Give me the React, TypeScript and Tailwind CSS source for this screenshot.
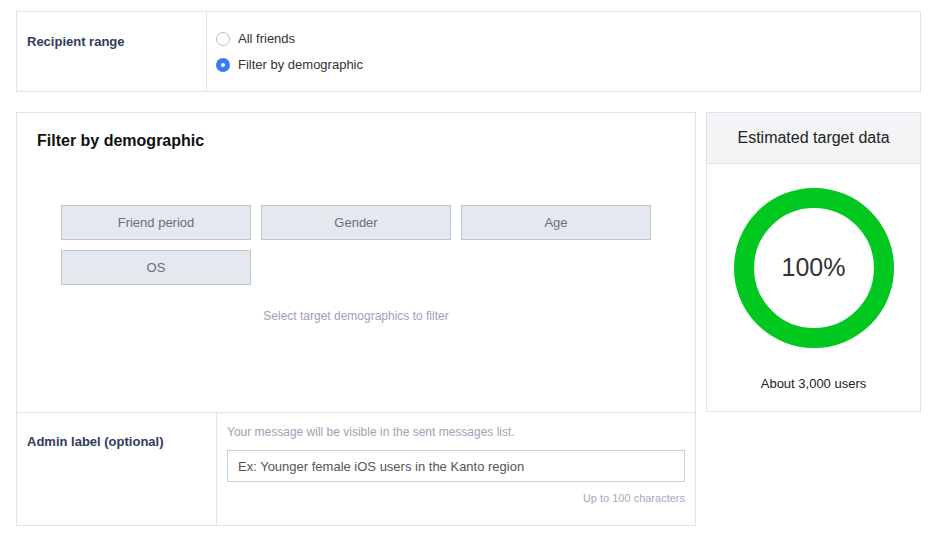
import { useState } from "react";

const FILTERS = ["Friend period", "Gender", "Age", "OS"];

function Radio({ checked, label, onClick }: { checked: boolean; label: string; onClick: () => void }) {
  return (
    <button className="flex items-center gap-2 h-[18px] text-[13px] text-[#333]" onClick={onClick}>
      {checked ? (
        <span className="w-[14px] h-[14px] rounded-full bg-[#3a7bf2] flex items-center justify-center">
          <span className="w-[4px] h-[4px] rounded-full bg-white" />
        </span>
      ) : (
        <span className="w-[14px] h-[14px] rounded-full border border-[#b9bcc2] bg-white" />
      )}
      <span>{label}</span>
    </button>
  );
}

function Donut({ percent }: { percent: number }) {
  const r = 70;
  const c = 2 * Math.PI * r;
  return (
    <div className="relative w-[160px] h-[160px]">
      <svg width="160" height="160" viewBox="0 0 160 160">
        <circle cx="80" cy="80" r={r} fill="none" stroke="#e5e7eb" strokeWidth="20" />
        <circle
          cx="80"
          cy="80"
          r={r}
          fill="none"
          stroke="#00c81f"
          strokeWidth="20"
          strokeDasharray={`${(c * percent) / 100} ${c}`}
          transform="rotate(-90 80 80)"
        />
      </svg>
      <div className="absolute inset-0 flex items-center justify-center text-[25px] text-[#333]">{percent}%</div>
    </div>
  );
}

export default function App() {
  const [range, setRange] = useState<"all" | "filter">("filter");

  return (
    <div className="w-[947px] min-h-[537px] bg-white pl-4 pt-[11px] font-['Liberation_Sans',Arial,sans-serif]">
      {/* recipient range */}
      <div className="w-[905px] h-[81px] border border-[#dfe2ea] flex">
        <div className="w-[190px] border-r border-[#dfe2ea] pl-[10px] pt-[17px]">
          <span className="text-[13px] leading-[18px] font-bold text-[#2f3b5c]">Recipient range</span>
        </div>
        <div className="pl-[9px] pt-[18px] flex flex-col gap-[8px] items-start">
          <Radio checked={range === "all"} label="All friends" onClick={() => setRange("all")} />
          <Radio checked={range === "filter"} label="Filter by demographic" onClick={() => setRange("filter")} />
        </div>
      </div>

      <div className="mt-[20px] flex gap-[10px] items-start">
        {/* demographic filter */}
        <div className="w-[680px] h-[414px] border border-[#dfe2ea] flex flex-col">
          <div className="flex-1 px-5 pt-[19px]">
            <h2 className="text-[16px] leading-[18px] font-bold text-[#111]">Filter by demographic</h2>
            <div className="mt-[55px] grid grid-cols-[190px_190px_190px] gap-[10px] justify-center">
              {FILTERS.map((f) => (
                <button
                  key={f}
                  className="h-[35px] bg-[#e4e8ef] border border-[#c0c6cf] text-[13px] text-[#6b6f77]"
                >
                  {f}
                </button>
              ))}
            </div>
            <p className="mt-[22px] text-center text-[12px] text-[#9ba3b6]">Select target demographics to filter</p>
          </div>
          <div className="h-[113px] border-t border-[#dfe2ea] flex">
            <div className="w-[200px] border-r border-[#dfe2ea] pl-[10px] pt-[16px]">
              <span className="text-[13px] leading-[18px] font-bold text-[#2f3b5c]">Admin label (optional)</span>
            </div>
            <div className="flex-1 pl-[10px] pr-[10px] pt-[11px]">
              <p className="text-[12px] leading-[16px] text-[#9ba3b6]">Your message will be visible in the sent messages list.</p>
              <input
                className="mt-[10px] w-full h-[32px] border border-[#c9cdd6] px-[10px] text-[13px] text-[#333] placeholder:text-[#555] outline-none"
                placeholder="Ex: Younger female iOS users in the Kanto region"
              />
              <p className="mt-[9px] text-right text-[11px] leading-[14px] text-[#a3aabb]">Up to 100 characters</p>
            </div>
          </div>
        </div>

        {/* estimate */}
        <div className="w-[215px] h-[300px] border border-[#dfe2ea] flex flex-col">
          <div className="h-[51px] bg-[#f3f4f6] border-b border-[#dfe2ea] flex items-center justify-center text-[16px] text-[#222]">
            Estimated target data
          </div>
          <div className="flex flex-col items-center pt-[24px]">
            <Donut percent={100} />
            <p className="mt-[26px] text-[13px] text-[#222]">About 3,000 users</p>
          </div>
        </div>
      </div>
    </div>
  );
}
